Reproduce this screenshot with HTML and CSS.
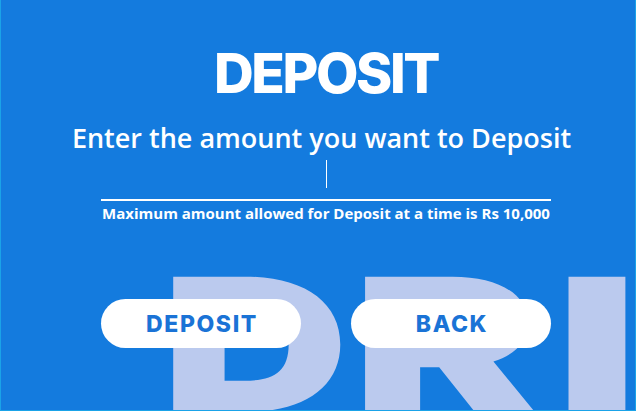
FILE: index.html
```html
<!DOCTYPE html>
<html>
<head>
<meta charset="utf-8">
<link rel="stylesheet" href="styles.css">
</head>
<body>
<div class="screen">
  <div class="watermark" aria-hidden="true"><span class="wm wm-d">D</span><span class="wm wm-r">R</span><span class="wm wm-i">I</span></div>
  <div class="content">
    <h1 class="title">DEPOSIT</h1>
    <p class="subtitle">Enter the amount you want to Deposit</p>
    <div class="field">
      <span class="caret"></span>
    </div>
    <p class="note">Maximum amount allowed for Deposit at a time is Rs 10,000</p>
    <div class="actions">
      <button class="btn">DEPOSIT</button>
      <button class="btn">BACK</button>
    </div>
  </div>
</div>
</body>
</html>
```
FILE: styles.css
```css
* { box-sizing: border-box; }
html, body { margin: 0; padding: 0; }
body { width: 636px; height: 411px; overflow: hidden; }

.screen {
  position: relative;
  width: 636px;
  height: 411px;
  background: #147bde;
  border-left: 1px solid #1aa3e8;
  border-right: 1px solid #1aa3e8;
  border-bottom: 1px solid #1aa3e8;
  overflow: hidden;
}

.watermark {
  position: absolute;
  left: 160px;
  top: 252px;
  display: flex;
  font-family: Inter, "Noto Sans", sans-serif;
  font-weight: 900;
  font-size: 186px;
  line-height: 1;
  color: #bbcaee;
  white-space: nowrap;
}

.wm { display: block; transform-origin: left top; }
.wm-d { width: 191px; transform: scaleX(1.4); }
.wm-r { width: 203px; transform: scaleX(1.5); }
.wm-i { width: 80px; transform: scaleX(1.55); }

.content {
  position: relative;
  display: flex;
  flex-direction: column;
  align-items: center;
  padding-top: 38px;
  padding-left: 16px;
}

.title {
  margin: 0;
  font-family: Inter, "Noto Sans", sans-serif;
  font-weight: 800;
  font-size: 55px;
  line-height: 70px;
  color: #fff;
  letter-spacing: -2.4px;
}

.subtitle {
  margin: 13px 9px 0 0;
  font-family: "Open Sans", sans-serif;
  font-weight: 600;
  font-size: 27px;
  line-height: 34px;
  color: #fff;
}

.field {
  width: 450px;
  height: 46px;
  margin-top: 0;
  border-bottom: 2px solid #fff;
  display: flex;
  justify-content: center;
  padding-top: 5px;
}

.caret {
  display: block;
  width: 1px;
  height: 28px;
  background: #fff;
}

.note {
  margin: 3px 0 0;
  font-family: "Open Sans", sans-serif;
  font-weight: 700;
  font-size: 15px;
  line-height: 18px;
  color: #fff;
}

.actions {
  display: flex;
  gap: 50px;
  margin-top: 77px;
}

.btn {
  width: 200px;
  height: 49px;
  border: 0;
  border-radius: 25px;
  background: #fff;
  color: #1a73d6;
  font-family: Inter, "Noto Sans", sans-serif;
  font-weight: 800;
  font-size: 23px;
  letter-spacing: 1.6px;
  padding: 0 0 0 2px;
}
```
